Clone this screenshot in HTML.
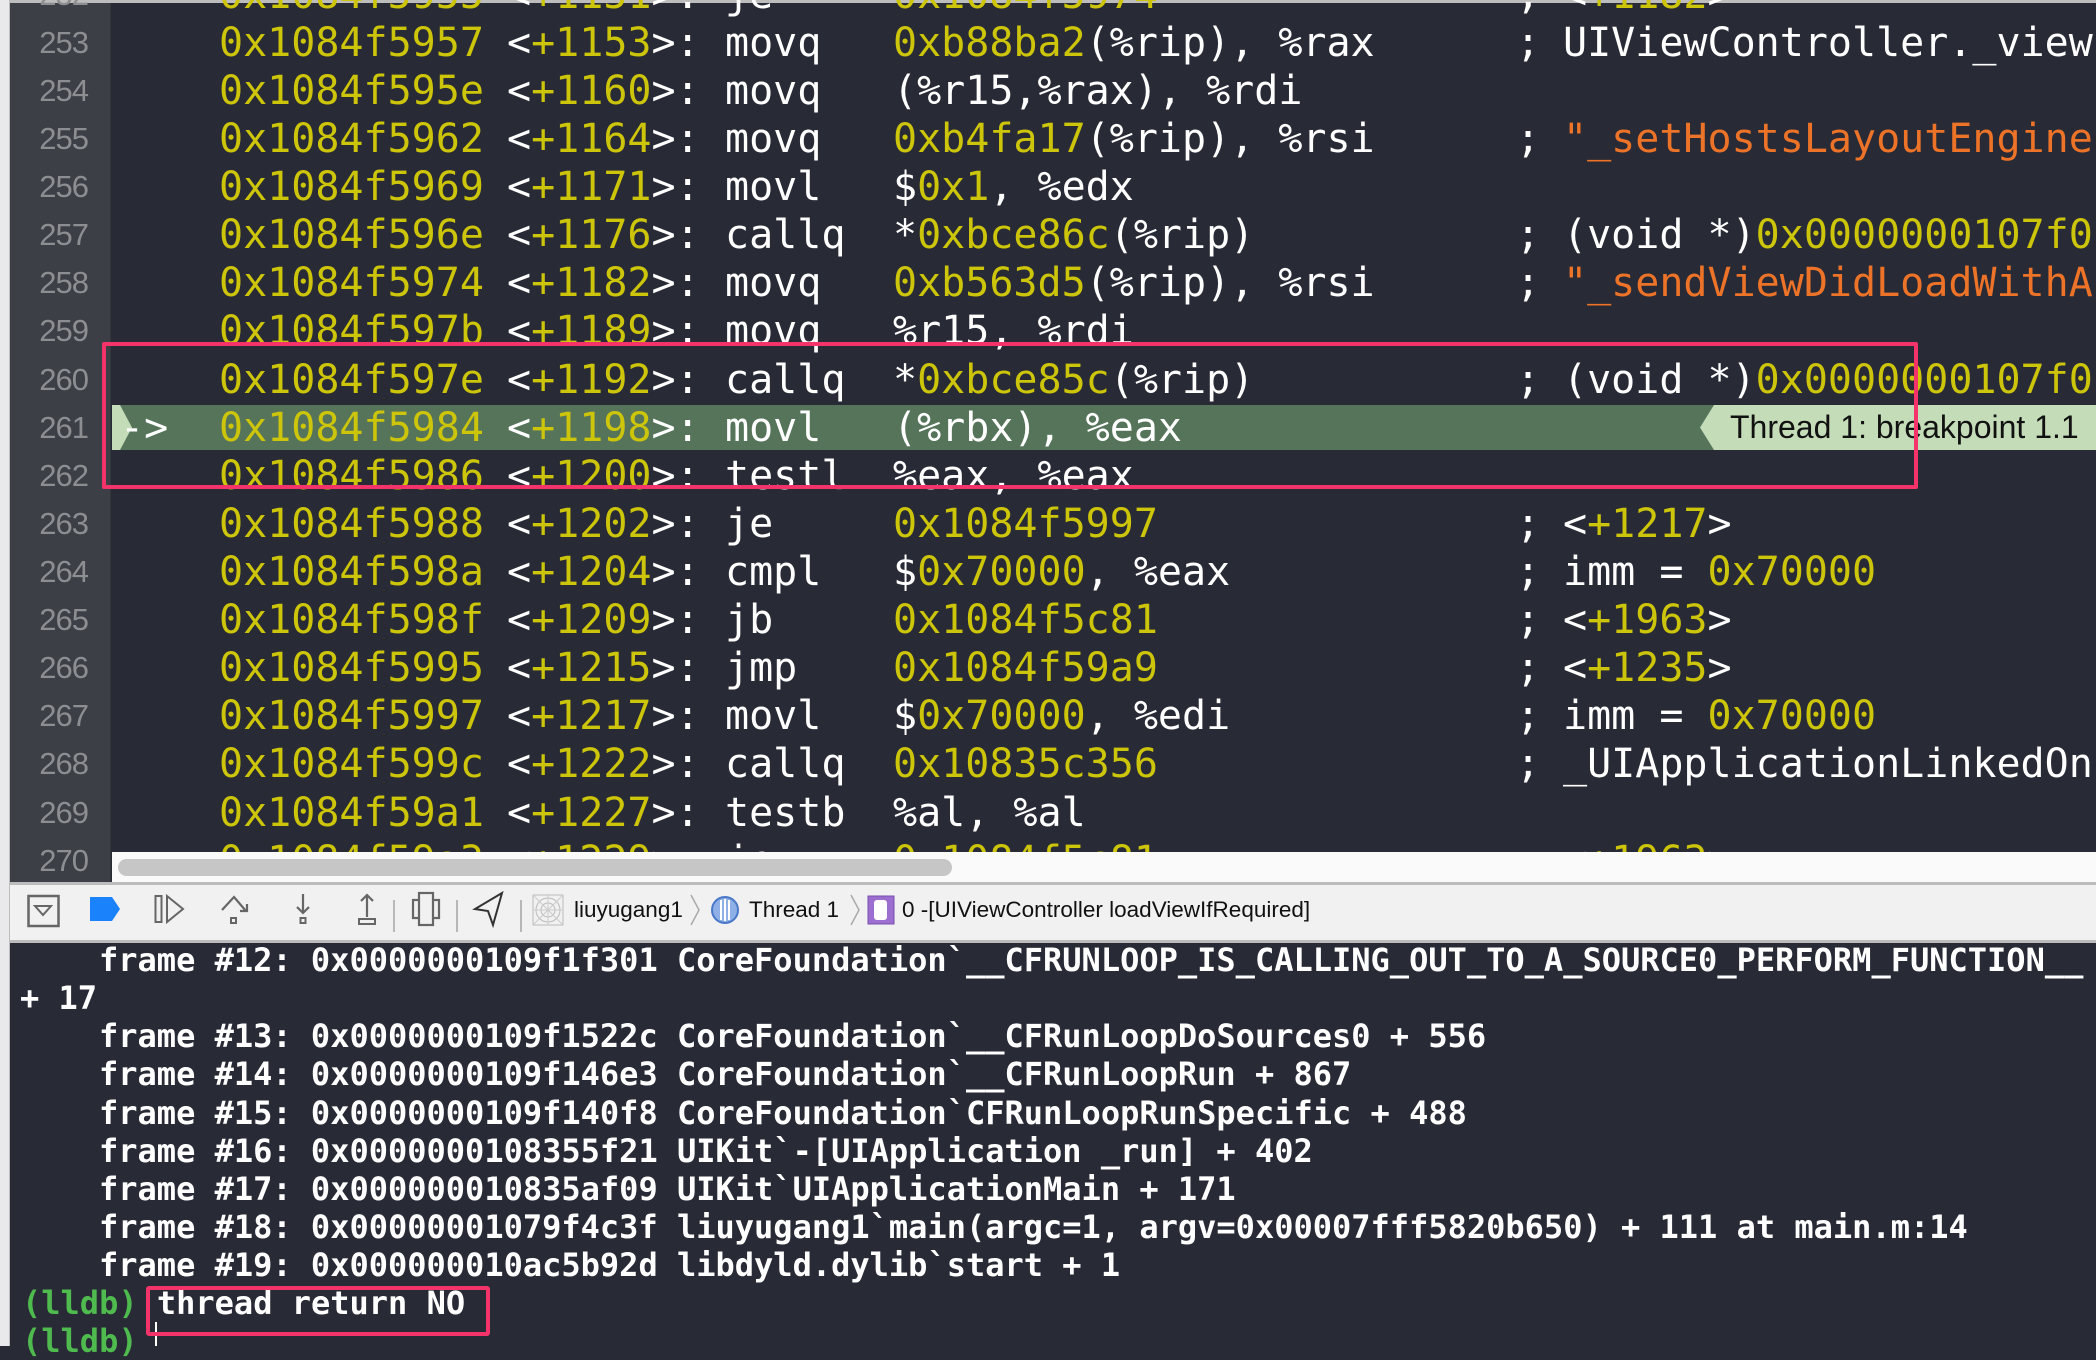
<!DOCTYPE html>
<html><head><meta charset="utf-8"><style>
*{margin:0;padding:0;box-sizing:border-box}
body{width:2096px;height:1346px;overflow:hidden;background:#282a35;position:relative;font-family:"DejaVu Sans Mono","Liberation Mono",monospace}
.strip{position:absolute;left:0;top:0;width:10px;height:1346px;background:#e9e8ea;border-right:1px solid #bdbdbd}
.gut{position:absolute;left:10px;top:0;width:101px;height:882px;background:#3d3f47;border-right:1px solid #34363d}
.ln{position:absolute;left:10px;width:78px;text-align:right;font-family:"Liberation Sans",sans-serif;font-size:31px;color:#8d8e92;letter-spacing:-1px;line-height:48px}
.row{position:absolute;left:0;height:48px;width:2096px;font-size:40px;line-height:48px;color:#fff;white-space:pre}
.row span{position:absolute;top:0}
.y{color:#cdc50a}.o{color:#ec7328}
i{font-style:normal}
.hl{position:absolute;left:112px;top:405px;width:1984px;height:45px;background:#55745a}
.con{position:absolute;left:0;font-size:32px;font-weight:bold;line-height:38px;color:#fff;white-space:pre}
.g{color:#4fbb4f}
.tb{position:absolute;left:10px;top:882px;width:2086px;height:61px;background:#f1f1f1;border-top:3px solid #bcbcbc;border-bottom:3px solid #bcbcbc}
.tb svg{position:absolute;top:0}
.tt{position:absolute;top:12px;font-family:"Liberation Sans",sans-serif;font-size:22.5px;color:#111}
</style></head><body>
<div class="strip"></div>
<div class="gut"></div>
<div style="position:absolute;left:10px;top:0;width:2086px;height:3px;background:#bdbdbd"></div>

<div class="ln" style="top:-29px">252</div>
<div class="ln" style="top:19px">253</div>
<div class="ln" style="top:67px">254</div>
<div class="ln" style="top:115px">255</div>
<div class="ln" style="top:163px">256</div>
<div class="ln" style="top:211px">257</div>
<div class="ln" style="top:259px">258</div>
<div class="ln" style="top:307px">259</div>
<div class="ln" style="top:356px">260</div>
<div class="ln" style="top:404px">261</div>
<div class="ln" style="top:452px">262</div>
<div class="ln" style="top:500px">263</div>
<div class="ln" style="top:548px">264</div>
<div class="ln" style="top:596px">265</div>
<div class="ln" style="top:644px">266</div>
<div class="ln" style="top:692px">267</div>
<div class="ln" style="top:740px">268</div>
<div class="ln" style="top:789px">269</div>
<div class="ln" style="top:837px">270</div>

<div class="hl"></div>
<svg style="position:absolute;left:112px;top:405px" width="20" height="45"><polygon points="0,0 8,0 20,22.5 8,45 0,45" fill="#c4dcb8"/></svg>
<svg style="position:absolute;left:1700px;top:405px" width="396" height="45"><polygon points="14,0 396,0 396,45 14,45 0,22.5" fill="#c5dcb9"/><text x="30" y="33" font-family="Liberation Sans,sans-serif" font-size="32" fill="#111">Thread 1: breakpoint 1.1</text></svg>

<div class="row" style="top:-29px"><span class="y" style="left:219px">0x1084f5955</span><span style="left:507px">&lt;<i class="y">+1151</i>&gt;:</span><span style="left:725px">je</span><span class="y" style="left:893px">0x1084f5974</span><span style="left:1516px">;</span><span style="left:1563px">&lt;<i class="y">+1182</i>&gt;</span></div>
<div class="row" style="top:19px"><span class="y" style="left:219px">0x1084f5957</span><span style="left:507px">&lt;<i class="y">+1153</i>&gt;:</span><span style="left:725px">movq</span><span style="left:893px"><i class="y">0xb88ba2</i>(%rip), %rax</span><span style="left:1516px">;</span><span style="left:1563px">UIViewController._view</span></div>
<div class="row" style="top:67px"><span class="y" style="left:219px">0x1084f595e</span><span style="left:507px">&lt;<i class="y">+1160</i>&gt;:</span><span style="left:725px">movq</span><span style="left:893px">(%r15,%rax), %rdi</span></div>
<div class="row" style="top:115px"><span class="y" style="left:219px">0x1084f5962</span><span style="left:507px">&lt;<i class="y">+1164</i>&gt;:</span><span style="left:725px">movq</span><span style="left:893px"><i class="y">0xb4fa17</i>(%rip), %rsi</span><span style="left:1516px">;</span><span class="o" style="left:1563px">"_setHostsLayoutEngine</span></div>
<div class="row" style="top:163px"><span class="y" style="left:219px">0x1084f5969</span><span style="left:507px">&lt;<i class="y">+1171</i>&gt;:</span><span style="left:725px">movl</span><span style="left:893px">$<i class="y">0x1</i>, %edx</span></div>
<div class="row" style="top:211px"><span class="y" style="left:219px">0x1084f596e</span><span style="left:507px">&lt;<i class="y">+1176</i>&gt;:</span><span style="left:725px">callq</span><span style="left:893px">*<i class="y">0xbce86c</i>(%rip)</span><span style="left:1516px">;</span><span style="left:1563px">(void *)<i class="y">0x0000000107f0</i></span></div>
<div class="row" style="top:259px"><span class="y" style="left:219px">0x1084f5974</span><span style="left:507px">&lt;<i class="y">+1182</i>&gt;:</span><span style="left:725px">movq</span><span style="left:893px"><i class="y">0xb563d5</i>(%rip), %rsi</span><span style="left:1516px">;</span><span class="o" style="left:1563px">"_sendViewDidLoadWithA</span></div>
<div class="row" style="top:307px"><span class="y" style="left:219px">0x1084f597b</span><span style="left:507px">&lt;<i class="y">+1189</i>&gt;:</span><span style="left:725px">movq</span><span style="left:893px">%r15, %rdi</span></div>
<div class="row" style="top:356px"><span class="y" style="left:219px">0x1084f597e</span><span style="left:507px">&lt;<i class="y">+1192</i>&gt;:</span><span style="left:725px">callq</span><span style="left:893px">*<i class="y">0xbce85c</i>(%rip)</span><span style="left:1516px">;</span><span style="left:1563px">(void *)<i class="y">0x0000000107f0</i></span></div>
<div class="row" style="top:404px"><span style="left:120px">-&gt;</span><span class="y" style="left:219px">0x1084f5984</span><span style="left:507px">&lt;<i class="y">+1198</i>&gt;:</span><span style="left:725px">movl</span><span style="left:893px">(%rbx), %eax</span></div>
<div class="row" style="top:452px"><span class="y" style="left:219px">0x1084f5986</span><span style="left:507px">&lt;<i class="y">+1200</i>&gt;:</span><span style="left:725px">testl</span><span style="left:893px">%eax, %eax</span></div>
<div class="row" style="top:500px"><span class="y" style="left:219px">0x1084f5988</span><span style="left:507px">&lt;<i class="y">+1202</i>&gt;:</span><span style="left:725px">je</span><span class="y" style="left:893px">0x1084f5997</span><span style="left:1516px">;</span><span style="left:1563px">&lt;<i class="y">+1217</i>&gt;</span></div>
<div class="row" style="top:548px"><span class="y" style="left:219px">0x1084f598a</span><span style="left:507px">&lt;<i class="y">+1204</i>&gt;:</span><span style="left:725px">cmpl</span><span style="left:893px">$<i class="y">0x70000</i>, %eax</span><span style="left:1516px">;</span><span style="left:1563px">imm = <i class="y">0x70000</i></span></div>
<div class="row" style="top:596px"><span class="y" style="left:219px">0x1084f598f</span><span style="left:507px">&lt;<i class="y">+1209</i>&gt;:</span><span style="left:725px">jb</span><span class="y" style="left:893px">0x1084f5c81</span><span style="left:1516px">;</span><span style="left:1563px">&lt;<i class="y">+1963</i>&gt;</span></div>
<div class="row" style="top:644px"><span class="y" style="left:219px">0x1084f5995</span><span style="left:507px">&lt;<i class="y">+1215</i>&gt;:</span><span style="left:725px">jmp</span><span class="y" style="left:893px">0x1084f59a9</span><span style="left:1516px">;</span><span style="left:1563px">&lt;<i class="y">+1235</i>&gt;</span></div>
<div class="row" style="top:692px"><span class="y" style="left:219px">0x1084f5997</span><span style="left:507px">&lt;<i class="y">+1217</i>&gt;:</span><span style="left:725px">movl</span><span style="left:893px">$<i class="y">0x70000</i>, %edi</span><span style="left:1516px">;</span><span style="left:1563px">imm = <i class="y">0x70000</i></span></div>
<div class="row" style="top:740px"><span class="y" style="left:219px">0x1084f599c</span><span style="left:507px">&lt;<i class="y">+1222</i>&gt;:</span><span style="left:725px">callq</span><span class="y" style="left:893px">0x10835c356</span><span style="left:1516px">;</span><span style="left:1563px">_UIApplicationLinkedOn</span></div>
<div class="row" style="top:789px"><span class="y" style="left:219px">0x1084f59a1</span><span style="left:507px">&lt;<i class="y">+1227</i>&gt;:</span><span style="left:725px">testb</span><span style="left:893px">%al, %al</span></div>
<div class="row" style="top:837px"><span class="y" style="left:219px">0x1084f59a3</span><span style="left:507px">&lt;<i class="y">+1229</i>&gt;:</span><span style="left:725px">je</span><span class="y" style="left:893px">0x1084f5c81</span><span style="left:1516px">;</span><span style="left:1563px">&lt;<i class="y">+1963</i>&gt;</span></div>

<div style="position:absolute;left:102px;top:342px;width:1816px;height:147px;border:4px solid #f5336b;border-radius:2px"></div>

<div style="position:absolute;left:112px;top:852px;width:1984px;height:30px;background:#fafafa"></div>
<div style="position:absolute;left:118px;top:859px;width:834px;height:17px;background:#c6c6c6;border-radius:9px"></div>

<div class="tb">
<svg style="left:17px" width="34" height="55"><rect x="1.5" y="11" width="30" height="30" fill="none" stroke="#666" stroke-width="2.5"/><path d="M8 21 L24 21 L16 30 Z" fill="none" stroke="#666" stroke-width="2"/></svg>
<svg style="left:80px" width="34" height="55"><path d="M0 12 H22 L30 24 L22 36 H0 Z" fill="#1a82fb"/></svg>
<svg style="left:144px" width="34" height="55"><rect x="1.5" y="11" width="6" height="26" fill="none" stroke="#666" stroke-width="2"/><path d="M13 11 L29 24 L13 37 Z" fill="none" stroke="#666" stroke-width="2"/></svg>
<svg style="left:210px" width="34" height="55"><path d="M2 25 L14 12 L26 26 M20 26 H27 V19" fill="none" stroke="#666" stroke-width="2.2"/><rect x="11" y="33" width="5" height="5" fill="none" stroke="#666" stroke-width="2"/></svg>
<svg style="left:276px" width="34" height="55"><path d="M17 9 V28 M11 22 L17 28 L23 22" fill="none" stroke="#666" stroke-width="2.2"/><rect x="14.5" y="33" width="5" height="5" fill="none" stroke="#666" stroke-width="2"/></svg>
<svg style="left:340px" width="34" height="55"><path d="M17 32 V10 M11 16 L17 10 L23 16" fill="none" stroke="#666" stroke-width="2.2"/><rect x="9" y="34" width="16" height="5" fill="none" stroke="#666" stroke-width="2"/></svg>
<div style="position:absolute;left:383px;top:15px;width:2px;height:32px;background:#b8b8b8"></div>
<svg style="left:401px" width="34" height="55"><rect x="2" y="15" width="26" height="18" fill="none" stroke="#666" stroke-width="2.2"/><rect x="8" y="8" width="14" height="32" fill="#f1f1f1" stroke="#666" stroke-width="2.2"/></svg>
<div style="position:absolute;left:446px;top:15px;width:2px;height:32px;background:#b8b8b8"></div>
<svg style="left:462px" width="34" height="55"><path d="M30 8 L3 24 L16 26 L21 40 Z" fill="none" stroke="#333" stroke-width="2"/></svg>
<div style="position:absolute;left:510px;top:15px;width:2px;height:32px;background:#b8b8b8"></div>
<svg style="left:522px" width="32" height="55"><rect x="1" y="10" width="30" height="30" fill="none" stroke="#bbb" stroke-width="1"/><circle cx="16" cy="25" r="12" fill="none" stroke="#bbb"/><circle cx="16" cy="25" r="7" fill="none" stroke="#bbb"/><path d="M1 25H31M16 10V40M1 10L31 40M31 10L1 40" stroke="#ccc" stroke-width="1"/></svg>
<div class="tt" style="left:564px">liuyugang1</div>
<svg style="left:678px" width="16" height="55"><path d="M3 10 L11 25 L3 40" fill="none" stroke="#aaa" stroke-width="1.5"/></svg>
<svg style="left:700px" width="30" height="55"><circle cx="15" cy="25" r="13" fill="#8fb0e6" stroke="#4a78c8" stroke-width="2"/><path d="M11 15V35M15 14V36M19 15V35" stroke="#fff" stroke-width="2"/></svg>
<div class="tt" style="left:739px">Thread 1</div>
<svg style="left:838px" width="16" height="55"><path d="M3 10 L11 25 L3 40" fill="none" stroke="#aaa" stroke-width="1.5"/></svg>
<svg style="left:857px" width="28" height="55"><rect x="1" y="11" width="26" height="28" fill="#9b6ed0" stroke="#7a4fb0"/><rect x="7" y="15" width="13" height="20" rx="3" fill="#fff"/></svg>
<div class="tt" style="left:892px">0 -[UIViewController loadViewIfRequired]</div>
</div>

<div class="con" style="left:99px;top:941px">frame #12: 0x0000000109f1f301 CoreFoundation`__CFRUNLOOP_IS_CALLING_OUT_TO_A_SOURCE0_PERFORM_FUNCTION__</div>
<div class="con" style="left:20px;top:979px">+ 17</div>
<div class="con" style="left:99px;top:1017px">frame #13: 0x0000000109f1522c CoreFoundation`__CFRunLoopDoSources0 + 556</div>
<div class="con" style="left:99px;top:1055px">frame #14: 0x0000000109f146e3 CoreFoundation`__CFRunLoopRun + 867</div>
<div class="con" style="left:99px;top:1094px">frame #15: 0x0000000109f140f8 CoreFoundation`CFRunLoopRunSpecific + 488</div>
<div class="con" style="left:99px;top:1132px">frame #16: 0x0000000108355f21 UIKit`-[UIApplication _run] + 402</div>
<div class="con" style="left:99px;top:1170px">frame #17: 0x000000010835af09 UIKit`UIApplicationMain + 171</div>
<div class="con" style="left:99px;top:1208px">frame #18: 0x00000001079f4c3f liuyugang1`main(argc=1, argv=0x00007fff5820b650) + 111 at main.m:14</div>
<div class="con" style="left:99px;top:1246px">frame #19: 0x000000010ac5b92d libdyld.dylib`start + 1</div>
<div class="con" style="left:22px;top:1284px"><span class="g">(lldb)</span> thread return NO</div>
<div class="con" style="left:22px;top:1322px"><span class="g">(lldb)</span></div>
<div style="position:absolute;left:155px;top:1322px;width:2px;height:24px;background:#fff"></div>
<div style="position:absolute;left:146px;top:1286px;width:344px;height:50px;border:4px solid #f5336b;border-radius:3px"></div>
</body></html>
